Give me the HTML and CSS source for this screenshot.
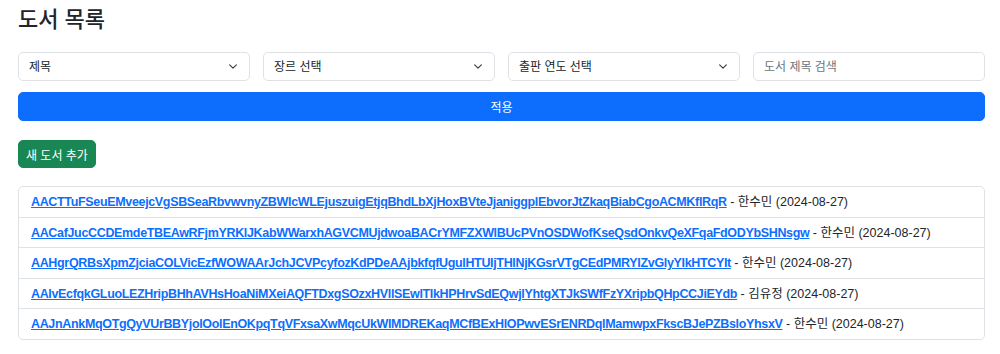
FILE: index.html
```html
<!DOCTYPE html>
<html lang="ko">
<head>
  <meta charset="UTF-8" />
  <title>도서 목록</title>
  <link rel="stylesheet" href="styles.css">
</head>
<body>
  <div class="container">
    <h1>도서 목록</h1>

    <form class="filters">
      <div class="filter-row">
        <select class="form-select">
          <option>제목</option>
        </select>
        <select class="form-select">
          <option>장르 선택</option>
        </select>
        <select class="form-select">
          <option>출판 연도 선택</option>
        </select>
        <input class="form-control" type="text" placeholder="도서 제목 검색">
      </div>
      <button type="button" class="btn btn-primary">적용</button>
    </form>

    <button type="button" class="btn btn-success">새 도서 추가</button>

    <ul class="list-group">
      <li class="list-group-item"><a href="#">AACTTuFSeuEMveejcVgSBSeaRbvwvnyZBWlcWLEjuszuigEtjqBhdLbXjHoxBVteJjaniggplEbvorJtZkaqBiabCgoACMKflRqR</a> - 한수민 (2024-08-27)</li>
      <li class="list-group-item"><a href="#">AACafJucCCDEmdeTBEAwRFjmYRKlJKabWWarxhAGVCMUjdwoaBACrYMFZXWlBUcPVnOSDWofKseQsdOnkvQeXFqaFdODYbSHNsgw</a> - 한수민 (2024-08-27)</li>
      <li class="list-group-item"><a href="#">AAHgrQRBsXpmZjciaCOLVicEzfWOWAArJchJCVPcyfozKdPDeAAjbkfqfUgulHTUIjTHlNjKGsrVTgCEdPMRYIZvGlyYIkHTCYIt</a> - 한수민 (2024-08-27)</li>
      <li class="list-group-item"><a href="#">AAIvEcfqkGLuoLEZHripBHhAVHsHoaNiMXeiAQFTDxgSOzxHVllSEwlTIkHPHrvSdEQwjlYhtgXTJkSWfFzYXripbQHpCCJiEYdb</a> - 김유정 (2024-08-27)</li>
      <li class="list-group-item"><a href="#">AAJnAnkMqOTgQyVUrBBYjolOolEnOKpqTqVFxsaXwMqcUkWIMDREKaqMCfBExHlOPwvESrENRDqlMamwpxFkscBJePZBsloYhsxV</a> - 한수민 (2024-08-27)</li>
    </ul>
  </div>
</body>
</html>
```

FILE: styles.css
```css
/* Bootstrap-like look, scaled down */
body {
  font-family: 'Liberation Sans', 'Noto Sans CJK KR', sans-serif;
  font-size: 12.5px;
  color: #212529;
  background-color: #fff;
  margin: 0;
}

.container {
  padding: 7px 15px 0 18px;
}

h1 {
  font-size: 22px;
  font-weight: 500;
  line-height: 1.2;
  margin: 0 0 19px;
}

.filters {
  margin-bottom: 19px;
}

.filter-row {
  display: grid;
  grid-template-columns: repeat(4, 1fr);
  gap: 13px;
  margin-bottom: 11px;
}

.form-select,
.form-control {
  font-family: inherit;
  font-size: 12px;
  color: #212529;
  height: 29px;
  padding: 0 10px;
  border: 1px solid #dee2e6;
  border-radius: 5px;
  background-color: #fff;
  box-sizing: border-box;
  width: 100%;
}

.form-select {
  appearance: none;
  padding-right: 30px;
  background-image: url("data:image/svg+xml,%3csvg xmlns='http://www.w3.org/2000/svg' viewBox='0 0 16 16'%3e%3cpath fill='none' stroke='%23343a40' stroke-linecap='round' stroke-linejoin='round' stroke-width='2' d='m2 5 6 6 6-6'/%3e%3c/svg%3e");
  background-repeat: no-repeat;
  background-position: right 10px center;
  background-size: 12px 9px;
}

.form-control::placeholder {
  color: #6c757d;
}

.btn {
  font-family: inherit;
  font-size: 12px;
  color: #fff;
  border: 1px solid transparent;
  border-radius: 5px;
  height: 29px;
  cursor: pointer;
}

.btn-primary {
  display: block;
  width: 100%;
  background-color: #0d6efd;
  border-color: #0d6efd;
}

.btn-success {
  background-color: #198754;
  border-color: #198754;
  padding: 0 7px;
  height: 28px;
  margin-bottom: 18px;
}

.list-group {
  list-style: none;
  margin: 0;
  padding: 0;
  border: 1px solid #dee2e6;
  border-radius: 5px;
}

.list-group-item {
  padding: 0 12px;
  height: 30.4px;
  line-height: 30px;
  white-space: nowrap;
  border-bottom: 1px solid #dee2e6;
  box-sizing: border-box;
}

.list-group-item:last-child {
  border-bottom: 0;
}

.list-group-item a {
  color: #0d6efd;
  font-weight: 700;
  letter-spacing: -0.34px;
  text-decoration: underline;
}
```
